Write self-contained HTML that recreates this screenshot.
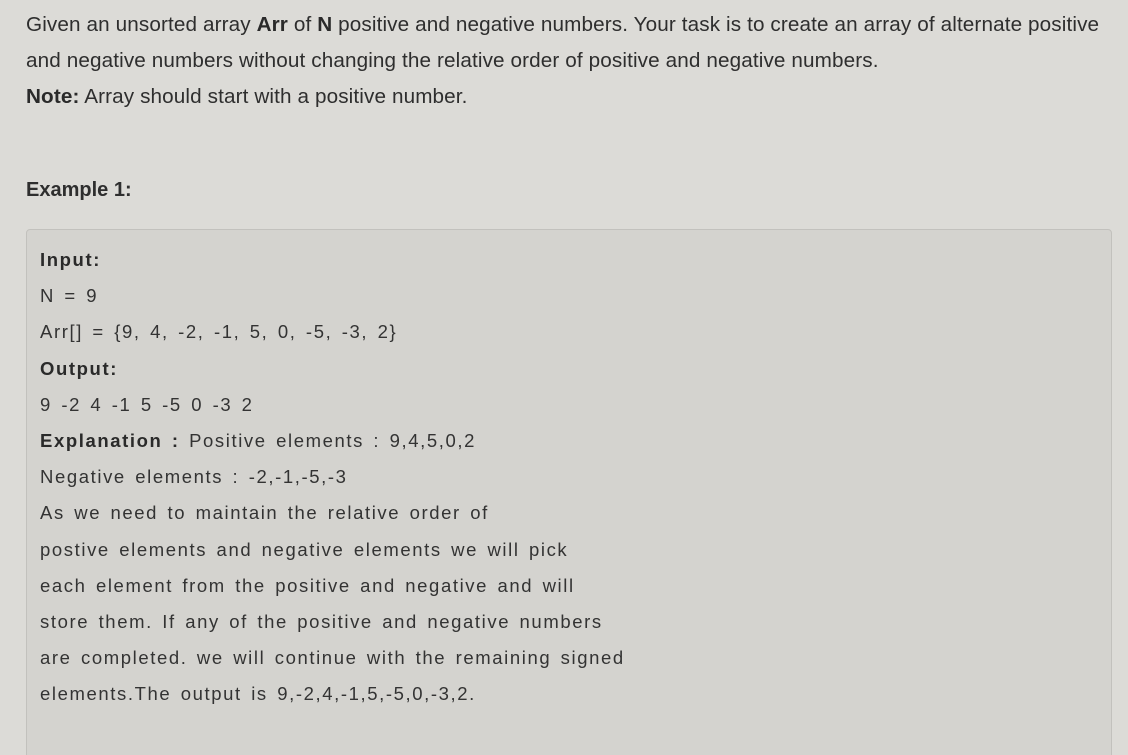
<!DOCTYPE html>
<html><head><style>
html,body{margin:0;height:755px;overflow:hidden}
body{background:#dcdbd7;width:1128px;font-family:"Liberation Sans",sans-serif;color:#2e2e2e;position:relative}
.p{position:absolute;left:26px;top:7px;font-size:20.7px;line-height:36px;letter-spacing:0.12px;white-space:nowrap}
.h{position:absolute;left:26px;top:172px;font-size:20px;font-weight:bold;line-height:36px}
.box{position:absolute;left:26px;top:229px;width:1084px;height:540px;background:#d4d3cf;border:1px solid #c2c1bd;border-radius:4px}
.pre{position:absolute;left:13px;top:12px;font-size:18.5px;line-height:36.2px;letter-spacing:1.6px;word-spacing:2.7px;white-space:pre;color:#333}
b{color:#2a2a2a}
</style></head><body>
<div class="p">Given an unsorted array <b>Arr</b> of <b>N</b> positive and negative numbers. Your task is to create an array of alternate positive<br>and negative numbers without changing the relative order of positive and negative numbers.<br><b>Note:</b> Array should start with a positive number.</div>
<div class="h">Example 1:</div>
<div class="box"><div class="pre"><b>Input:</b>
N = 9
Arr[] = {9, 4, -2, -1, 5, 0, -5, -3, 2}
<b>Output:</b>
9 -2 4 -1 5 -5 0 -3 2
<b>Explanation :</b> Positive elements : 9,4,5,0,2
Negative elements : -2,-1,-5,-3
As we need to maintain the relative order of
postive elements and negative elements we will pick
each element from the positive and negative and will
store them. If any of the positive and negative numbers
are completed. we will continue with the remaining signed
elements.The output is 9,-2,4,-1,5,-5,0,-3,2.</div></div>
</body></html>
